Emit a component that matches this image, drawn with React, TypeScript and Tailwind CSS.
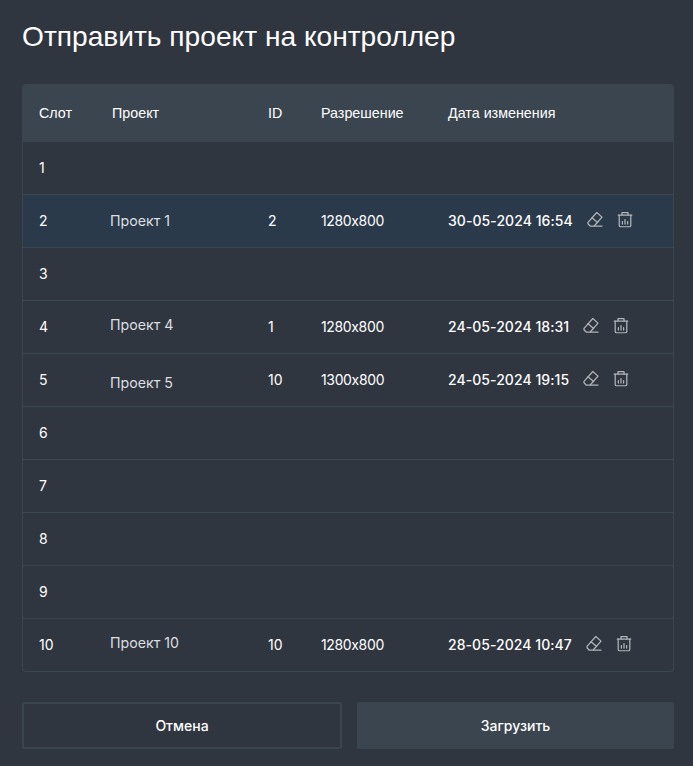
const rows = [
  { slot: '1' },
  { slot: '2', project: 'Проект 1', id: '2', res: '1280x800', date: '30-05-2024 16:54', active: true },
  { slot: '3' },
  { slot: '4', project: 'Проект 4', shift: '-translate-y-0.5', id: '1', res: '1280x800', date: '24-05-2024 18:31' },
  { slot: '5', project: 'Проект 5', shift: 'translate-y-[3px]', id: '10', res: '1300x800', date: '24-05-2024 19:15' },
  { slot: '6' },
  { slot: '7' },
  { slot: '8' },
  { slot: '9' },
  { slot: '10', project: 'Проект 10', shift: '-translate-y-0.5', id: '10', res: '1280x800', date: '28-05-2024 10:47' },
];

function EraserIcon() {
  return (
    <svg width="16" height="16" viewBox="0 0 16 16" fill="none" stroke="#b0b4b9" strokeWidth="1.25" strokeLinejoin="round" strokeLinecap="round">
      <path d="M9.8 1 15 5.6 7.2 14.5H3.2L1 12.2V10.8Z" />
      <path d="M5 6.2 10.6 11" />
      <path d="M7.6 14.6H15" />
    </svg>
  );
}

function TrashIcon() {
  return (
    <svg width="16" height="16" viewBox="0 0 16 16" fill="none" stroke="#b0b4b9" strokeWidth="1.25" strokeLinejoin="round" strokeLinecap="round">
      <path d="M5 3.4V1H11V3.4" />
      <path d="M1.2 3.6H14.8" />
      <path d="M2.2 3.6V14C2.2 14.8 2.8 15.4 3.6 15.4H12.4C13.2 15.4 13.8 14.8 13.8 14V3.6" />
      <path d="M5.4 10V12.6M8 8V12.6M10.6 10V12.6" />
    </svg>
  );
}

export default function App() {
  return (
    <div className="w-[693px] h-[766px] overflow-hidden bg-[#2f3640] pl-[22px] pr-[19px] pt-[20px] font-['Inter',sans-serif] text-sm text-white [font-feature-settings:'calt'_0]">
      <h1 className="font-['Liberation_Sans',sans-serif] text-[28.15px] leading-[34px] h-[64px]">
        Отправить проект на контроллер
      </h1>

      <div className="w-[652px] border-x border-b border-[#3a4652] rounded-[4px] overflow-hidden">
        {/* Header */}
        <div className="-mx-px flex items-center h-[58px] bg-[#3b4550] font-['Liberation_Sans',sans-serif] text-[14.3px]">
          <div className="w-[90px] pl-[17px]">Слот</div>
          <div className="w-[156px]">Проект</div>
          <div className="w-[53px]">ID</div>
          <div className="w-[127px]">Разрешение</div>
          <div>Дата изменения</div>
        </div>

        {rows.map((row, i) => (
          <div
            key={row.slot}
            className={`flex items-center ${i > 0 ? 'h-[53px] border-t border-[#3a4652]' : 'h-[52px]'} ${row.active ? 'bg-[#2b3a4b]' : ''}`}
          >
            <div className="w-[87px] pl-[16px]">{row.slot}</div>
            <div className={`w-[158px] text-[14.2px] text-[#dcdee0] ${row.shift ?? ''}`}>{row.project}</div>
            <div className="w-[53px]">{row.id}</div>
            <div className="w-[127px] tracking-[-0.35px]">{row.res}</div>
            {row.date && (
              <div className="flex items-center">
                <span className="font-medium tracking-[0.06px]">{row.date}</span>
                <span className="ml-[14px] flex items-center gap-[14px] -translate-y-[1.5px]">
                  <EraserIcon />
                  <TrashIcon />
                </span>
              </div>
            )}
          </div>
        ))}
      </div>

      {/* Footer */}
      <div className="mt-[30px] flex gap-[15px] font-medium">
        <button className="w-[320px] h-[47px] border-2 border-[#3b4550] rounded-[2px] text-center">Отмена</button>
        <button className="w-[317px] h-[47px] bg-[#3b4550] rounded-[2px] text-center">Загрузить</button>
      </div>
    </div>
  );
}
